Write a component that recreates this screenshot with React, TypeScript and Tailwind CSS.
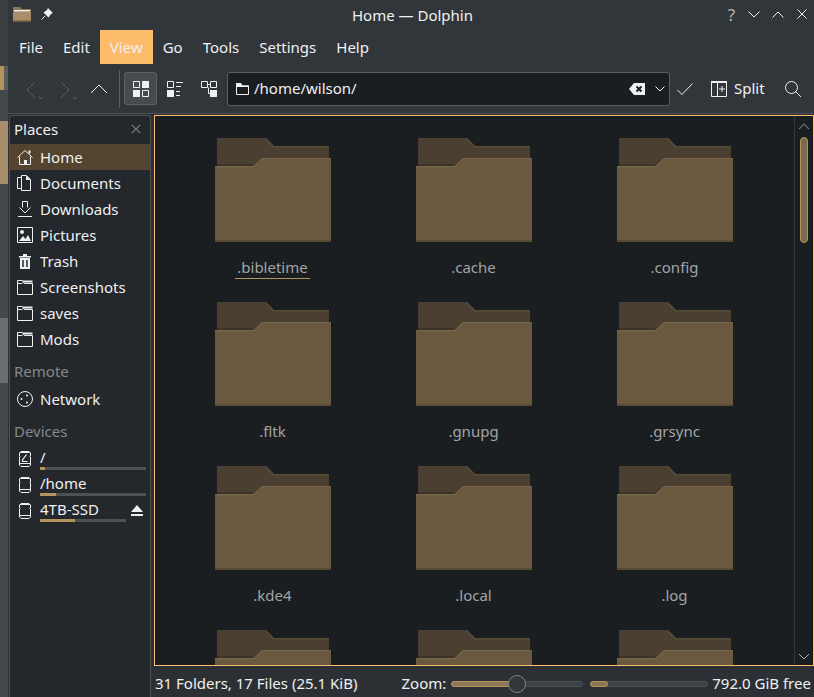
import type { ReactNode } from "react";

const FONT = "font-['Noto_Sans','Open_Sans',sans-serif]";

function Icon({ children, w = 16, h = 16, className = "" }: { children: ReactNode; w?: number; h?: number; className?: string }) {
  return (
    <svg width={w} height={h} viewBox={`0 0 ${w} ${h}`} fill="none" stroke="#eff0f1" strokeWidth="1" className={`shrink-0 ${className}`}>
      {children}
    </svg>
  );
}

const HomeIcon = () => (
  <Icon>
    <path d="M.5 8.5 8 1.500l7.500 7M2.500 7.500v8h11v-8" />
    <path d="M7 11h3v4.500H7z" fill="#eff0f1" stroke="none" />
    <path d="M11.500 1.500h2v3h-2z" fill="#eff0f1" stroke="none" />
  </Icon>
);
const DocsIcon = () => (
  <Icon>
    <path d="M4.500 2.500h-4v11h4" />
    <path d="M4.500.5h5l4 4v11h-9z" />
    <path d="M9 .5l4.500 4.500H9z" fill="#eff0f1" stroke="none" />
  </Icon>
);
const DownIcon = () => (
  <Icon>
    <path d="M5.500 6.500v-6h5v6M2.500 6.500 8 12l5.500-5.500M1 15.500h14" />
  </Icon>
);
const PicIcon = () => (
  <Icon>
    <path d="M.5.5h15v15H.5z" />
    <circle cx="5" cy="5" r="2" fill="#eff0f1" stroke="none" />
    <path d="M2 14l4-5 2.500 3L11 8l3 6z" fill="#eff0f1" stroke="none" />
  </Icon>
);
const TrashIcon = () => (
  <Icon>
    <path d="M2 3h12v1.500H2zM6 1h4v2H6zM3 5h10v11H3z" fill="#eff0f1" stroke="none" />
    <path d="M6 7v7M10 7v7" stroke="#24272c" strokeWidth="1.500" />
  </Icon>
);
const FolderIcon = () => (
  <Icon>
    <path d="M.5 1.500h5l2 3h8v11H.5z" />
    <path d="M5.500 1.500H15.500v2H7z" fill="#eff0f1" stroke="none" />
    <path d="M.5 4.500h4l2-1" />
  </Icon>
);
const NetworkIcon = () => (
  <Icon>
    <circle cx="8" cy="8" r="7.500" />
    <circle cx="4.500" cy="8" r="1" fill="#eff0f1" stroke="none" />
    <circle cx="10" cy="4.500" r="1" fill="#eff0f1" stroke="none" />
    <circle cx="10" cy="11.500" r="1" fill="#eff0f1" stroke="none" />
  </Icon>
);
const DriveIcon = ({ root }: { root?: boolean }) => (
  <Icon w={12} h={16}>
    <path d="M2 .5h8L11.500 2v3l-.5.5.5.5v8l-1.500 1.500H2L.5 14V6l.5-.5L.5 5V2z" />
    <path d="M1 12.500h10" />
    <path d="M1 1h10v1H1z" fill="#eff0f1" stroke="none" />
    {root && <path d="M7.500 3.500 3.500 9v1.500h5" strokeWidth="1.200" />}
  </Icon>
);

const places = [
  { name: "Home", icon: <HomeIcon />, active: true },
  { name: "Documents", icon: <DocsIcon /> },
  { name: "Downloads", icon: <DownIcon /> },
  { name: "Pictures", icon: <PicIcon /> },
  { name: "Trash", icon: <TrashIcon /> },
  { name: "Screenshots", icon: <FolderIcon /> },
  { name: "saves", icon: <FolderIcon /> },
  { name: "Mods", icon: <FolderIcon /> },
];

const folders = [".bibletime", ".cache", ".config", ".fltk", ".gnupg", ".grsync", ".kde4", ".local", ".log", "", "", ""];

function BigFolder() {
  return (
    <svg width="116" height="104" viewBox="0 0 116 104" className="shrink-0">
      <path d="M2 0h49l8 8h55v30H2z" fill="#4a3f30" />
      <path d="M51 0l8 8h55v1.500H58L50 1z" fill="#574b3a" />
      <path d="M2 26h37l-3 3H2z" fill="#3d3427" />
      <path d="M0 28h39l8-8h69v84H0z" fill="#6a583f" />
      <path d="M0 28h39l8-8h69v1h-68.500l-8 8.500H0z" fill="#75644b" />
      <path d="M0 102h116v2H0z" fill="#594a35" />
    </svg>
  );
}

function SectionTitle({ children }: { children: ReactNode }) {
  return <div className="h-[34px] pt-[9px] pl-[4px] leading-5 text-[#85888b]">{children}</div>;
}

function Device({ name, fill, root, eject }: { name: string; fill: string; root?: boolean; eject?: boolean }) {
  return (
    <div className="flex h-[26px] pl-[9px]">
      <div className="mt-[5px] w-[21px] shrink-0"><DriveIcon root={root} /></div>
      <div className="flex min-w-0 flex-1 items-start pr-[4px]">
        <div className="min-w-0 flex-1">
          <div className="h-[21px] leading-[22px]">{name}</div>
          <div className="h-[3px] bg-[#4d5054]">
            <div className={`h-full bg-[#b5935f] ${fill}`} />
          </div>
        </div>
        {eject && (
          <svg width="14" height="12" viewBox="0 0 14 12" className="mt-[7px] mr-[2px] ml-[4px] shrink-0" fill="#eff0f1">
            <path d="M7 0l6 7H1zM1 9h12v2H1z" />
          </svg>
        )}
      </div>
    </div>
  );
}

function Sidebar() {
  return (
    <aside className="ml-px flex w-[142px] shrink-0 flex-col rounded-t-[3px] border border-b-0 border-[#4d5155] bg-[#24272c]">
      <div className="flex h-[28px] items-center justify-between pr-[9px] pb-[2px] pl-[4px]">
        <span>Places</span>
        <svg width="10" height="10" viewBox="0 0 10 10" stroke="#808386" strokeWidth="1.100"><path d="M.8.8l8.400 8.400M9.200.8.800 9.200" /></svg>
      </div>
      {places.map((p) => (
        <div key={p.name} className={`flex h-[26px] items-center pl-[7px] ${p.active ? "bg-[#54432e]" : ""}`}>
          {p.icon}
          <span className="ml-[7px]">{p.name}</span>
        </div>
      ))}
      <SectionTitle>Remote</SectionTitle>
      <div className="flex h-[26px] items-center pl-[7px]">
        <NetworkIcon />
        <span className="ml-[7px]">Network</span>
      </div>
      <SectionTitle>Devices</SectionTitle>
      <Device name="/" fill="w-[5px]" root />
      <Device name="/home" fill="w-[16px]" />
      <Device name="4TB-SSD" fill="w-[35px]" eject />
    </aside>
  );
}

function Toolbar() {
  return (
    <div className="flex h-[49px] shrink-0 items-center">
      <svg width="24" height="24" viewBox="0 0 24 24" fill="none" stroke="#5b6065" className="ml-[16px] shrink-0"><path d="M11 5 3 13l8 8M15 20l2 2 2-2" /></svg>
      <svg width="24" height="24" viewBox="0 0 24 24" fill="none" stroke="#5b6065" className="ml-[10px] shrink-0"><path d="M3 5l8 8-8 8M15 20l2 2 2-2" /></svg>
      <svg width="18" height="12" viewBox="0 0 18 12" fill="none" stroke="#eff0f1" className="ml-[8px] shrink-0"><path d="M1 10 9 2l8 8" /></svg>
      <div className="ml-[11px] h-[38px] w-px shrink-0 bg-[#5b5f63]" />
      <div className="ml-[4px] flex h-[33px] w-[33px] shrink-0 items-center justify-center rounded-[3px] border border-[#5e6266] bg-[#474b50]">
        <Icon>
          <path d="M.5.5h6v6h-6zM9.500 9.500h6v6h-6z" />
          <path d="M9 0h7v7H9zM0 9h7v7H0z" fill="#eff0f1" stroke="none" />
        </Icon>
      </div>
      <div className="ml-[1px] flex h-[33px] w-[34px] shrink-0 items-center justify-center">
        <Icon>
          <path d="M.5.5h6v6h-6zM9 1.500h7M9 5.500h5M9 10.500h4M9 14.500h4" />
          <path d="M0 9h7v7H0z" fill="#eff0f1" stroke="none" />
        </Icon>
      </div>
      <div className="flex h-[33px] w-[34px] shrink-0 items-center justify-center">
        <Icon>
          <path d="M.5.5h6v6h-6zM9.500.5h6v6h-6zM6.500 3.500h3M7.500 6.500v6h2" />
          <path d="M9 9h7v7H9z" fill="#eff0f1" stroke="none" />
        </Icon>
      </div>
      <div className="ml-[1px] flex h-[34px] w-[443px] shrink-0 items-center rounded-[3px] border border-[#5a5e62] bg-[#1b1e20] pl-[8px]">
        <Icon w={13} h={13}>
          <path d="M.5 1.500h4l1.500 2.500h6.500v8.500H.5z" />
          <path d="M0 1h5l1.500 2.500H13V5H0z" fill="#eff0f1" stroke="none" />
        </Icon>
        <span className="ml-[5px] flex-1">/home/wilson/</span>
        <svg width="16" height="12" viewBox="0 0 16 12" className="shrink-0">
          <path d="M5 0h11v12H5L0 6z" fill="#eff0f1" />
          <path d="M7.500 3.500l5 5M12.500 3.500l-5 5" stroke="#1b1e20" strokeWidth="2" />
        </svg>
        <svg width="10" height="6" viewBox="0 0 10 6" fill="none" stroke="#eff0f1" className="mr-[4px] ml-[10px] shrink-0"><path d="M.5.500 5 5l4.500-4.500" /></svg>
      </div>
      <svg width="16" height="12" viewBox="0 0 16 12" fill="none" stroke="#eff0f1" className="ml-[7px] shrink-0"><path d="M.5 7 5 11.500 15.500.5" /></svg>
      <Icon className="ml-[18px]">
        <path d="M.5.5h15v15H.5zM6.500.5v15M11 5v6M8 8h6" />
        <path d="M0 0h16v2H0z" fill="#eff0f1" stroke="none" />
      </Icon>
      <span className="ml-[7px]">Split</span>
      <svg width="16" height="16" viewBox="0 0 16 16" fill="none" stroke="#eff0f1" className="ml-[20px] shrink-0">
        <circle cx="6.500" cy="6.500" r="6" />
        <path d="M10.500 10.500 16 16" />
      </svg>
    </div>
  );
}

function FileView() {
  return (
    <div className="flex min-h-0 flex-1 border border-[#fdbc6b] bg-[#1b1e20]">
      <div className="min-w-0 flex-1 overflow-hidden">
        <div className="grid grid-cols-[201px_201px_201px] pt-[22px] pl-[17px]">
          {folders.map((name, i) => (
            <div key={i} className="flex h-[164px] flex-col">
              <div className="ml-[43px]"><BigFolder /></div>
              <div className="mt-[15px] self-center">
                <div className={`border-b px-[2px] pb-px leading-5 text-[#a2a4a6] ${i === 0 ? "border-[#b5935f]" : "border-transparent"}`}>{name}</div>
              </div>
            </div>
          ))}
        </div>
      </div>
      <div className="flex w-[19px] shrink-0 flex-col items-center border-l border-[#31363b] pt-[6px] pb-[4px]">
        <svg width="12" height="8" viewBox="0 0 12 8" fill="none" stroke="#6a6e72" strokeWidth="1.200"><path d="M1 7l5-5 5 5" /></svg>
        <div className="mt-[7px] h-[106px] w-[8px] rounded-full border border-[#b5935f] bg-[#7c6a50]" />
        <svg width="12" height="8" viewBox="0 0 12 8" fill="none" stroke="#eff0f1" strokeOpacity=".7" className="mt-auto"><path d="M1 1l5 5 5-5" /></svg>
      </div>
    </div>
  );
}

function StatusBar() {
  return (
    <div className="flex h-[31px] shrink-0 items-center pt-[4px] pl-px">
      <span>31 Folders, 17 Files (25.1 KiB)</span>
      <span className="ml-[44px]">Zoom:</span>
      <div className="relative ml-[5px] h-[6px] w-[132px] rounded-full border border-[#4d5155] bg-[#3b4045]">
        <div className="-m-px h-[6px] w-[66px] rounded-full border border-[#b5935f] bg-[#8d7654]" />
        <div className="absolute top-[-7px] left-[56px] h-[18px] w-[18px] rounded-full border border-[#7e8286] bg-[#31363b]" />
      </div>
      <div className="ml-[7px] h-[6px] w-[118px] rounded-full border border-[#4d5155] bg-[#3b4045]">
        <div className="-m-px h-[6px] w-[18px] rounded-full border border-[#b5935f] bg-[#8d7654]" />
      </div>
      <span className="ml-[4px] whitespace-nowrap">792.0 GiB free</span>
    </div>
  );
}

export default function App() {
  return (
    <div className={`flex h-[697px] w-[814px] overflow-hidden bg-[#31363b] text-[15px] text-[#eff0f1] ${FONT}`}>
      <div className="flex w-[8px] shrink-0 flex-col bg-[#43484c]">
        <div className="h-[66px] bg-[#3c4044]" />
        <div className="h-[24px] bg-[#595d60]"><div className="h-full w-[4px] bg-[#b5935f]" /></div>
        <div className="h-[31px]" />
        <div className="h-[63px] bg-[#a88e6b]" />
        <div className="h-[134px]" />
        <div className="h-[65px] bg-[#6b6e70]" />
      </div>

      <div className="flex min-w-0 flex-1 flex-col">
        <div className="flex h-[30px] shrink-0 items-center">
          <div className="flex flex-1 items-center pb-[2px] pl-[5px]">
            <svg width="18" height="16" viewBox="0 0 18 16">
              <path d="M0 1h7l2 2h9v13H0z" fill="#8d7654" />
              <path d="M1 4h16v1.500H1z" fill="#eff0f1" />
              <path d="M0 6h18v10H0z" fill="#a88e6b" />
              <path d="M0 14.500h18V16H0z" fill="#6a583f" />
            </svg>
            <svg width="12" height="12" viewBox="0 0 12 12" className="ml-[10px]" fill="#eff0f1">
              <path d="M7 0l5 5-2 1-2.500 3.500L2.500 4.500 6 2z" />
              <path d="M4 8 .5 11.500" stroke="#eff0f1" />
            </svg>
          </div>
          <span className="ml-[5px]">Home — Dolphin</span>
          <div className="flex flex-1 items-center justify-end pr-[7px] pb-[2px]">
            <span className="mr-[13px] text-[17px] leading-none text-[#b4b6b8]">?</span>
            <svg width="12" height="7" viewBox="0 0 12 7" fill="none" stroke="#eff0f1"><path d="M.5.5 6 6l5.500-5.500" /></svg>
            <svg width="12" height="7" viewBox="0 0 12 7" fill="none" stroke="#eff0f1" className="ml-[12px]"><path d="M.5 6.500 6 1l5.500 5.500" /></svg>
            <svg width="10" height="10" viewBox="0 0 10 10" fill="none" stroke="#eff0f1" className="ml-[13px]"><path d="M.5.5l9 9M9.500.5l-9 9" /></svg>
          </div>
        </div>

        <div className="flex h-[34px] shrink-0 items-stretch pl-px">
          {["File", "Edit", "View", "Go", "Tools", "Settings", "Help"].map((m) => (
            <div key={m} className={`flex items-center px-[10px] ${m === "View" ? "bg-[#fdbc6b]" : ""}`}>{m}</div>
          ))}
        </div>

        <Toolbar />
        <div className="h-px shrink-0 bg-[#4d5155]" />

        <div className="flex min-h-0 flex-1 bg-[#2c3035] pt-px">
          <Sidebar />
          <div className="ml-[3px] flex min-w-0 flex-1 flex-col">
            <FileView />
            <StatusBar />
          </div>
        </div>
      </div>
    </div>
  );
}
